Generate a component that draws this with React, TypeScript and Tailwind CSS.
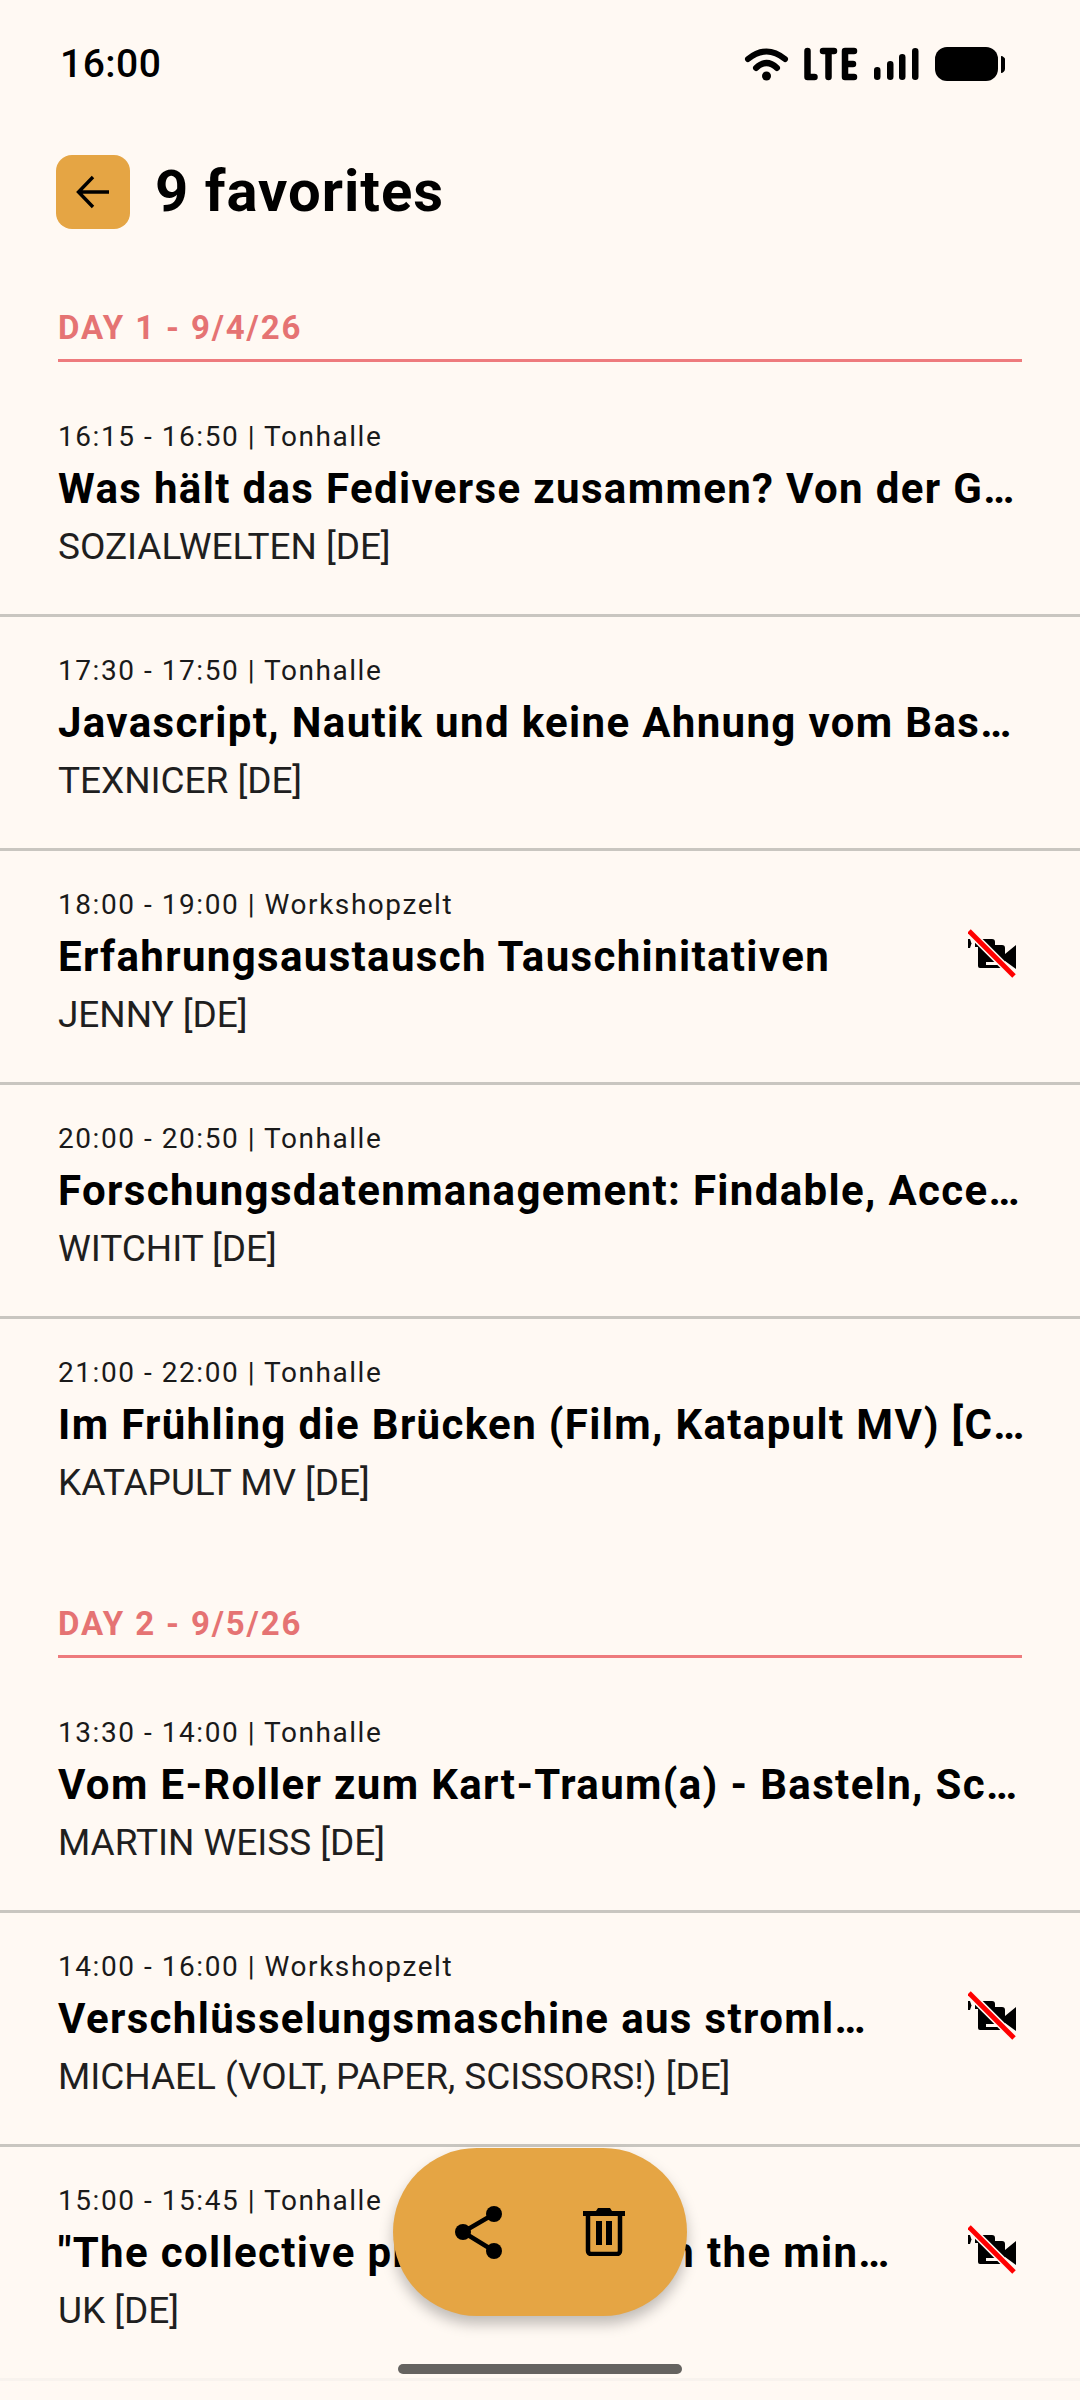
const day1 = [
  { time: "16:15 - 16:50 | Tonhalle", title: "Was hält das Fediverse zusammen? Von der G…", speaker: "SOZIALWELTEN [DE]" },
  { time: "17:30 - 17:50 | Tonhalle", title: "Javascript, Nautik und keine Ahnung vom Bas…", speaker: "TEXNICER [DE]" },
  { time: "18:00 - 19:00 | Workshopzelt", title: "Erfahrungsaustausch Tauschinitativen", speaker: "JENNY [DE]", noVideo: true },
  { time: "20:00 - 20:50 | Tonhalle", title: "Forschungsdatenmanagement: Findable, Acce…", speaker: "WITCHIT [DE]" },
  { time: "21:00 - 22:00 | Tonhalle", title: "Im Frühling die Brücken (Film, Katapult MV) [C…", speaker: "KATAPULT MV [DE]" },
]

const day2 = [
  { time: "13:30 - 14:00 | Tonhalle", title: "Vom E-Roller zum Kart-Traum(a) - Basteln, Sc…", speaker: "MARTIN WEISS [DE]" },
  { time: "14:00 - 16:00 | Workshopzelt", title: "Verschlüsselungsmaschine aus stroml…", speaker: "MICHAEL (VOLT, PAPER, SCISSORS!) [DE]", noVideo: true },
  { time: "15:00 - 15:45 | Tonhalle", title: "\"The collective process through the min…", speaker: "UK [DE]", noVideo: true },
]

const NoVideo = () => (
  <svg width="50" height="50" viewBox="0 0 50 50" className="mr-[4px] mt-[43px] shrink-0">
    <path d="M0 10h2l1.5 4.5L2 19H0z" fill="#000" />
    <path d="M7 10h17a3 3 0 0 1 3 3v3h7a3 3 0 0 1 3 3v6l11-9v24l-11-8v5a2 2 0 0 1-2 2H12a2 2 0 0 1-2-2V18H7z" fill="#000" />
    <rect x="18" y="33" width="12" height="3" fill="#fff9f3" />
    <path d="M1 2 46 47" stroke="#fff9f3" strokeWidth="8" />
    <path d="M1 2 46 47" stroke="#ff0000" strokeWidth="5" />
  </svg>
)

const Row = ({ item, last }: { item: any; last?: boolean }) => (
  <div className={`flex items-start px-[58px] pt-[35px] ${last ? "" : "border-b-[3px] border-[#c9c6c0] pb-[43px]"}`}>
    <div className="min-w-0 flex-1">
      <div className="text-[28px] leading-[38px] tracking-[1.55px] text-[#1a1a1a]">{item.time}</div>
      <div className="mb-[2px] whitespace-nowrap text-[42px] font-bold leading-[65px] tracking-[1.35px] text-black">{item.title}</div>
      <div className="text-[37px] leading-[48px] tracking-[-0.05px] text-[#1f1f1f]">{item.speaker}</div>
    </div>
    {item.noVideo && <NoVideo />}
  </div>
)

const DayHeader = ({ label }: { label: string }) => (
  <div className="mx-[58px] mb-[21px] h-[56px] border-b-[3px] border-[#ee7b7d] text-[33px] font-bold leading-[44px] tracking-[1.85px] text-[#e57373]">{label}</div>
)

export default function App() {
  return (
    <div className="relative flex h-[2400px] w-[1080px] flex-col overflow-hidden bg-[#fff9f3] font-['Roboto',sans-serif]">
      {/* status bar */}
      <div className="flex h-[157px] items-start justify-between pl-[60px] pr-[74px] pt-[39px]">
        <span className="text-[39px] font-medium leading-[50px] tracking-[0.5px] text-black">16:00</span>
        <svg width="266" height="36" viewBox="0 0 266 36" className="mt-[7px]">
          <path d="M8 13Q26.5-2 45 13" fill="none" stroke="#000" strokeWidth="6" strokeLinecap="round" />
          <path d="M16 22Q26.5 12 37 22" fill="none" stroke="#000" strokeWidth="6" strokeLinecap="round" />
          <circle cx="26.5" cy="30" r="4.5" fill="#000" />
          <path d="M67.5 5v26h7M83 5h11M88.5 5v26M114 5h-9v26h9M105 18h8" fill="none" stroke="#000" strokeWidth="6.5" strokeLinecap="round" strokeLinejoin="round" />
          <rect x="134" y="21" width="6.5" height="13" rx="3.2" />
          <rect x="147" y="15" width="6.5" height="19" rx="3.2" />
          <rect x="159" y="8" width="6.5" height="26" rx="3.2" />
          <rect x="172" y="2" width="6.5" height="32" rx="3.2" />
          <rect x="195" y="1" width="63" height="34" rx="12" />
          <path d="M261 10c2 0 4 2 4 3v10c0 2-2 4-4 4z" />
        </svg>
      </div>
      {/* top bar */}
      <div className="mb-[79px] flex h-[70px] items-center pl-[56px]">
        <div className="flex h-[74px] w-[74px] items-center justify-center rounded-[16px] bg-[#e5a544]">
          <svg width="40" height="40" viewBox="0 0 40 40">
            <path d="M36 20H7M20 5 5.5 20 20 35" fill="none" stroke="#000" strokeWidth="3.4" />
          </svg>
        </div>
        <h1 className="mb-[2px] ml-[25px] text-[58px] font-bold leading-[70px] tracking-[1px] text-black">9 favorites</h1>
      </div>
      {/* list */}
      <div>
        <DayHeader label="DAY 1 - 9/4/26" />
        {day1.map((item, i) => <Row key={i} item={item} last={i === day1.length - 1} />)}
      </div>
      <div className="mt-[95px]">
        <DayHeader label="DAY 2 - 9/5/26" />
        {day2.map((item, i) => <Row key={i} item={item} last={i === day2.length - 1} />)}
      </div>
      {/* fab */}
      <div className="absolute left-[393px] top-[2148px] flex h-[168px] w-[294px] items-center justify-center gap-[81px] rounded-[84px] bg-[#e5a544] shadow-[0_8px_14px_rgba(0,0,0,0.25)]">
        <svg width="47" height="53" viewBox="0 0 47 53">
          <path d="M39 8 8 26l31 19" fill="none" stroke="#000" strokeWidth="4.5" />
          <circle cx="39" cy="8" r="8" />
          <circle cx="8" cy="26" r="8" />
          <circle cx="39" cy="45" r="8" />
        </svg>
        <svg width="42" height="48" viewBox="0 0 42 48">
          <path d="M0 3h13l2-3h12l2 3h13v5H0z" />
          <path d="M5 7v36a3 3 0 0 0 3 3h26a3 3 0 0 0 3-3V7" fill="none" stroke="#000" strokeWidth="4.5" />
          <path d="M13 13h6v24h-6zM23 13h6v24h-6z" />
        </svg>
      </div>
      {/* gesture bar */}
      <div className="mt-auto flex h-[36px] flex-col items-center">
        <div className="h-[10px] w-[284px] rounded-full bg-[#656360]" />
        <div className="mt-[4px] h-[3px] w-full bg-[#f8f3ee]" />
      </div>
    </div>
  )
}
